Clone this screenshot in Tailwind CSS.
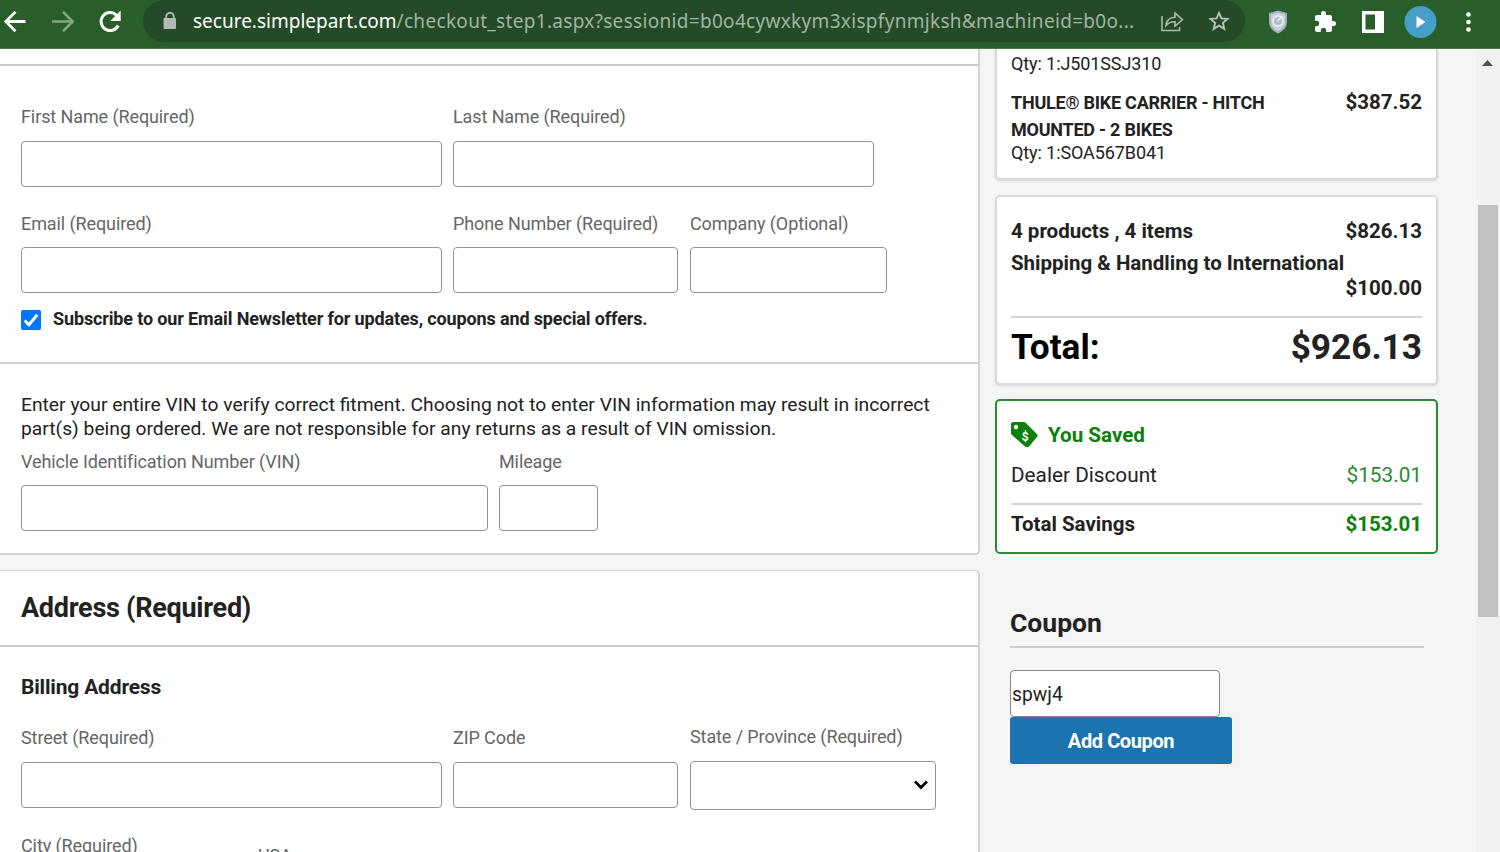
<!DOCTYPE html>
<html lang="en">

<head>
  <meta charset="UTF-8" />
  <meta name="viewport" content="width=device-width, initial-scale=1.0" />
  <title>Checkout</title>
  <script src="https://cdn.jsdelivr.net/npm/@tailwindcss/browser@4"></script>
</head>

<body class="flex h-[852px] w-[1500px] flex-col overflow-hidden bg-[#f5f5f5] font-['Roboto',sans-serif] text-[#222]">
  <!-- Browser toolbar -->
  <header class="flex h-[49px] shrink-0 items-start border-b border-[#4b7a4c] bg-[#285e2a] text-white">
    <div class="flex h-[43px] w-[143px] shrink-0 items-center">
      <svg class="ml-[3px] h-6 w-6" viewBox="0 0 24 24" fill="none" stroke="#fff" stroke-width="2.8"><path d="M22.500 11.500H3.500M12.500 1.800 2.800 11.500l9.700 9.700" /></svg>
      <svg class="ml-[25px] h-6 w-6" viewBox="0 0 24 24" fill="none" stroke="#86a587" stroke-width="2.600"><path d="M0 11.500h20M11 1.800l9.700 9.700-9.700 9.700" /></svg>
      <svg class="ml-[22px] h-6 w-6" viewBox="0 0 24 24"><path d="M20.200 15.500A9 9 0 1 1 18.500 5.200" fill="none" stroke="#fff" stroke-width="3" /><path d="M22.700.5v10.500H12.200z" fill="#fff" /></svg>
    </div>
    <div class="flex h-[42px] w-[1102px] shrink-0 items-center rounded-[21px] bg-[#254a28]">
      <svg class="ml-5 h-[18px] w-3.5 shrink-0" viewBox="0 0 14 18"><path d="M3.200 7V4.600a3.800 3.800 0 0 1 7.600 0V7" fill="none" stroke="#b2bab8" stroke-width="1.800" /><rect x=".5" y="6" width="12.500" height="11" rx="1" fill="#b2bab8" /></svg>
      <span class="ml-4 w-[942px] shrink-0 whitespace-nowrap pt-px font-['Noto_Sans',sans-serif] text-[19px] text-[#a0b5a1]"><span class="text-white">secure.simplepart.com</span><span class="tracking-[0.31px]">/checkout_step1.aspx?sessionid=b0o4cywxkym3xispfynmjksh&amp;machineid=b0o...</span></span>
      <svg class="ml-[25px] h-[22px] w-6 shrink-0" viewBox="0 0 24 22" fill="none" stroke="#a9b8aa" stroke-width="1.600"><path d="M2 6v14.500h17.500V17" /><path d="M6 15.500c.5-5.500 4-8 9-8.200V3l7.500 6.800L15 16v-4.300c-4 0-6.800 1-9 3.800z" /></svg>
      <svg class="ml-6 h-[22px] w-[22px] shrink-0" viewBox="0 0 22 22" fill="none" stroke="#b4c2b4" stroke-width="1.900"><path d="m11 2.800 2.400 5.600 6.100.5-4.600 4 1.400 6-5.300-3.200-5.300 3.200 1.400-6-4.600-4 6.100-.5z" /></svg>
    </div>
    <div class="flex h-[43px] items-center">
      <svg class="ml-[23px] h-6 w-5" viewBox="0 0 20 24"><path d="M10 .5 19 3v9c0 5-3.500 9-9 11.500C4.500 21 1 17 1 12V3z" fill="#a6adbf" /><path d="M10 2.500 17 4.500V12c0 4-2.800 7-7 9.200C5.800 19 3 16 3 12V4.500z" fill="#c9cedb" /><circle cx="10" cy="11" r="5" fill="#b3bacb" stroke="#e8ebf2" stroke-width="1.800" /><path d="M9 11.500 14.500 6" stroke="#eef0f5" stroke-width="1.500" /></svg>
      <svg class="ml-[26px] h-[22px] w-[22px]" viewBox="1 1 22 22" fill="#fff"><path d="M20.500 11H19V7c0-1.100-.9-2-2-2h-4V3.500a2.500 2.500 0 0 0-5 0V5H4c-1.100 0-1.990.9-1.990 2v3.800H3.500a2.700 2.700 0 0 1 0 5.400H2V20c0 1.100.9 2 2 2h3.800v-1.500a2.700 2.700 0 0 1 5.400 0V22H17c1.100 0 2-.9 2-2v-4h1.500a2.500 2.500 0 0 0 0-5z" /></svg>
      <svg class="ml-[26px] h-[22px] w-[22px]" viewBox="0 0 22 22"><path d="M0 0h22v22H0zM3.500 3.500v15H13v-15z" fill="#fff" fill-rule="evenodd" /></svg>
      <svg class="ml-5 h-8 w-[33px]" viewBox="0 0 33 32"><circle cx="16.500" cy="16" r="16" fill="#459fc6" /><path d="M12.500 10v12l9-6z" fill="#fff" /></svg>
      <svg class="ml-[29px] h-5 w-[5px]" viewBox="0 0 5 20" fill="#fff"><circle cx="2.500" cy="2.500" r="2.300" /><circle cx="2.500" cy="10" r="2.300" /><circle cx="2.500" cy="17.500" r="2.300" /></svg>
    </div>
  </header>

  <div class="flex min-h-0 flex-1">
    <main class="w-[980px] shrink-0">
      <!-- Contact information -->
      <section class="rounded-br-[5px] border-b-2 border-r-2 border-[#d3d3d3] bg-white">
        <div class="h-[17px] border-b-2 border-[#c9c9c9]"></div>
        <div class="border-b-2 border-[#d0d0d0] pb-[30px] pl-[21px] pt-[39px]">
          <div class="flex gap-[11px] text-[18px] tracking-[-0.1px] text-[#666]">
            <label class="flex w-[421px] flex-col gap-3 leading-6"><span>First Name (Required)</span><input type="text" class="h-[46px] w-full rounded-[4px] border-[1.5px] border-[#929292] bg-white" /></label>
            <label class="flex w-[421px] flex-col gap-3 leading-6"><span>Last Name (Required)</span><input type="text" class="h-[46px] w-full rounded-[4px] border-[1.5px] border-[#929292] bg-white" /></label>
          </div>
          <div class="mt-[25px] flex gap-[11px] text-[18px] tracking-[-0.1px] text-[#666]">
            <label class="flex w-[421px] flex-col gap-[11px] leading-6"><span>Email (Required)</span><input type="text" class="h-[46px] w-full rounded-[4px] border-[1.5px] border-[#929292] bg-white" /></label>
            <label class="flex w-[226px] flex-col gap-[11px] leading-6"><span>Phone Number (Required)</span><input type="text" class="h-[46px] w-[225px] rounded-[4px] border-[1.5px] border-[#929292] bg-white" /></label>
            <label class="flex w-[197px] flex-col gap-[11px] leading-6"><span>Company (Optional)</span><input type="text" class="h-[46px] w-full rounded-[4px] border-[1.5px] border-[#929292] bg-white" /></label>
          </div>
          <div class="mt-[15px] flex h-6 items-center text-[18px] font-bold">
            <svg class="h-5 w-5" viewBox="0 0 19 19"><rect width="19" height="19" rx="2" fill="#0075ff" /><path d="m3.500 10 4 4 8-9.500" fill="none" stroke="#fff" stroke-width="2.800" /></svg>
            <span class="mb-[3px] ml-3 whitespace-nowrap tracking-[-0.135px]">Subscribe to our Email Newsletter for updates, coupons and special offers.</span>
          </div>
        </div>
        <div class="pb-[22px] pl-[21px] pt-[29px]">
          <p class="whitespace-nowrap text-[19.25px] leading-[23.5px]">Enter your entire VIN to verify correct fitment. Choosing not to enter VIN information may result in incorrect<br />part(s) being ordered. We are not responsible for any returns as a result of VIN omission.</p>
          <div class="mt-2.5 flex gap-[11px] text-[18px] tracking-[-0.1px] text-[#666]">
            <label class="flex w-[467px] flex-col gap-[11px] leading-6"><span>Vehicle Identification Number (VIN)</span><input type="text" class="h-[46px] w-full rounded-[4px] border-[1.5px] border-[#929292] bg-white" /></label>
            <label class="flex w-[99px] flex-col gap-[11px] leading-6"><span>Mileage</span><input type="text" class="h-[46px] w-full rounded-[4px] border-[1.5px] border-[#929292] bg-white" /></label>
          </div>
        </div>
      </section>

      <!-- Address -->
      <section class="mt-[15px] h-[300px] rounded-tr-[5px] border-r-2 border-t border-[#d3d3d3] bg-white">
        <h2 class="flex h-[76px] items-center border-b-2 border-[#c9c9c9] pl-[21px] text-[27px] font-bold tracking-[-0.27px]">Address (Required)</h2>
        <div class="pl-[21px] pt-7">
          <h3 class="text-[21px] font-bold leading-6 tracking-[-0.18px]">Billing Address</h3>
          <div class="mt-[26px] flex gap-[11px] text-[18px] tracking-[-0.1px] text-[#666]">
            <label class="mt-px flex w-[421px] flex-col gap-3 leading-6"><span>Street (Required)</span><input type="text" class="h-[46px] w-full rounded-[4px] border-[1.5px] border-[#929292] bg-white" /></label>
            <label class="mt-px flex w-[226px] flex-col gap-3 leading-6"><span>ZIP Code</span><input type="text" class="h-[46px] w-[225px] rounded-[4px] border-[1.5px] border-[#929292] bg-white" /></label>
            <div class="flex w-[246px] flex-col gap-3 leading-6">
              <span>State / Province (Required)</span>
              <div class="flex h-[49px] items-center justify-end rounded-[4px] border-[1.5px] border-[#929292] bg-white pb-px pr-[7px]">
                <svg class="h-2.5 w-3.5" viewBox="0 0 14 10" fill="none" stroke="#000" stroke-width="2.700"><path d="m1 1.500 6 6 6-6" /></svg>
              </div>
            </div>
          </div>
          <div class="mt-6 flex text-[18px] leading-6 tracking-[-0.1px] text-[#666]">
            <span class="w-[237px]">City (Required)</span>
            <span class="pt-2.5">USA</span>
          </div>
        </div>
      </section>
    </main>

    <!-- Order summary -->
    <aside class="ml-[15px] w-[443px] shrink-0">
      <div class="h-[131px] rounded-b-[5px] border-x-2 border-b-2 border-[#d9d9d9] bg-white px-3.5 pt-[3px] shadow-sm">
        <p class="text-[18px] leading-6 tracking-[-0.1px]">Qty: 1:J501SSJ310</p>
        <div class="mt-3.5 flex justify-between font-bold">
          <h4 class="text-[18px] leading-[26.5px] tracking-[-0.24px]">THULE® BIKE CARRIER - HITCH<br />MOUNTED - 2 BIKES</h4>
          <span class="text-[20.5px] leading-6">$387.52</span>
        </div>
        <p class="-mt-0.5 text-[18px] leading-6 tracking-[-0.1px]">Qty: 1:SOA567B041</p>
      </div>

      <div class="mt-[15px] h-[190px] rounded-[5px] border-2 border-[#d9d9d9] bg-white px-3.5 pt-[22px] text-[20.5px] font-bold shadow-sm">
        <div class="flex justify-between leading-6"><span>4 products , 4 items</span><span>$826.13</span></div>
        <div class="mt-2 whitespace-nowrap leading-6">Shipping &amp; Handling to International</div>
        <div class="mt-px text-right leading-6">$100.00</div>
        <div class="mt-4 flex h-[61px] items-center justify-between border-t-2 border-[#d3d3d3] text-[35.2px]"><span class="text-black">Total:</span><span>$926.13</span></div>
      </div>

      <div class="mt-3.5 h-[155px] rounded-[5px] border-2 border-[#2a8a30] bg-white px-3.5 pt-5 text-[20.5px]">
        <div class="flex h-7 items-center text-[20.6px] font-bold text-[#0b800b]">
          <svg class="h-[27px] w-[27px]" viewBox="0 0 27 27"><path d="M2 0h10.500c1 0 1.700.3 2.400 1l11 11c1 1 1 2 0 3L18 24.500c-1 1-3 1-4 0l-12.500-11C.5 12.500 0 12 0 11V2C0 1 1 0 2 0z" fill="#0b800b" /><circle cx="5" cy="5" r="2.200" fill="#fff" /><text x="14.200" y="18.500" text-anchor="middle" font-size="12" font-weight="700" fill="#fff">$</text></svg>
          <span class="ml-[10px]">You Saved</span>
        </div>
        <div class="mt-3.5 flex justify-between text-[20.75px] leading-6"><span>Dealer Discount</span><span class="text-[#2a8a30]">$153.01</span></div>
        <div class="mt-4 flex justify-between border-t-2 border-[#d3d3d3] pt-[7px] font-bold leading-6"><span>Total Savings</span><span class="text-[#0b800b]">$153.01</span></div>
      </div>

      <!-- Coupon -->
      <div class="ml-[15px] mt-[53px] w-[414px]">
        <h2 class="flex h-[41px] items-start border-b-2 border-[#ccc] text-[26.5px] font-bold leading-8">Coupon</h2>
        <input type="text" value="spwj4" class="mt-[22px] block h-[47px] w-[210px] rounded-[4px] border-[1.5px] border-[#888] bg-white pl-px pt-0.5 text-[19.3px] text-[#222]" />
        <button class="block h-[47px] w-[222px] rounded-[3px] bg-[#1b73af] text-[20px] font-bold tracking-[-0.4px] text-white">Add Coupon</button>
      </div>
    </aside>

    <!-- Scrollbar -->
    <div class="ml-auto flex w-6 flex-col bg-[#f1f1f1]">
      <svg class="ml-1.5 mt-[11px] h-1.5 w-[11px]" viewBox="0 0 11 6"><path d="M5.500 0 11 6H0z" fill="#505050" /></svg>
      <div class="ml-0.5 mt-[139px] h-[412px] w-5 bg-[#c1c1c1]"></div>
    </div>
  </div>
</body>

</html>
